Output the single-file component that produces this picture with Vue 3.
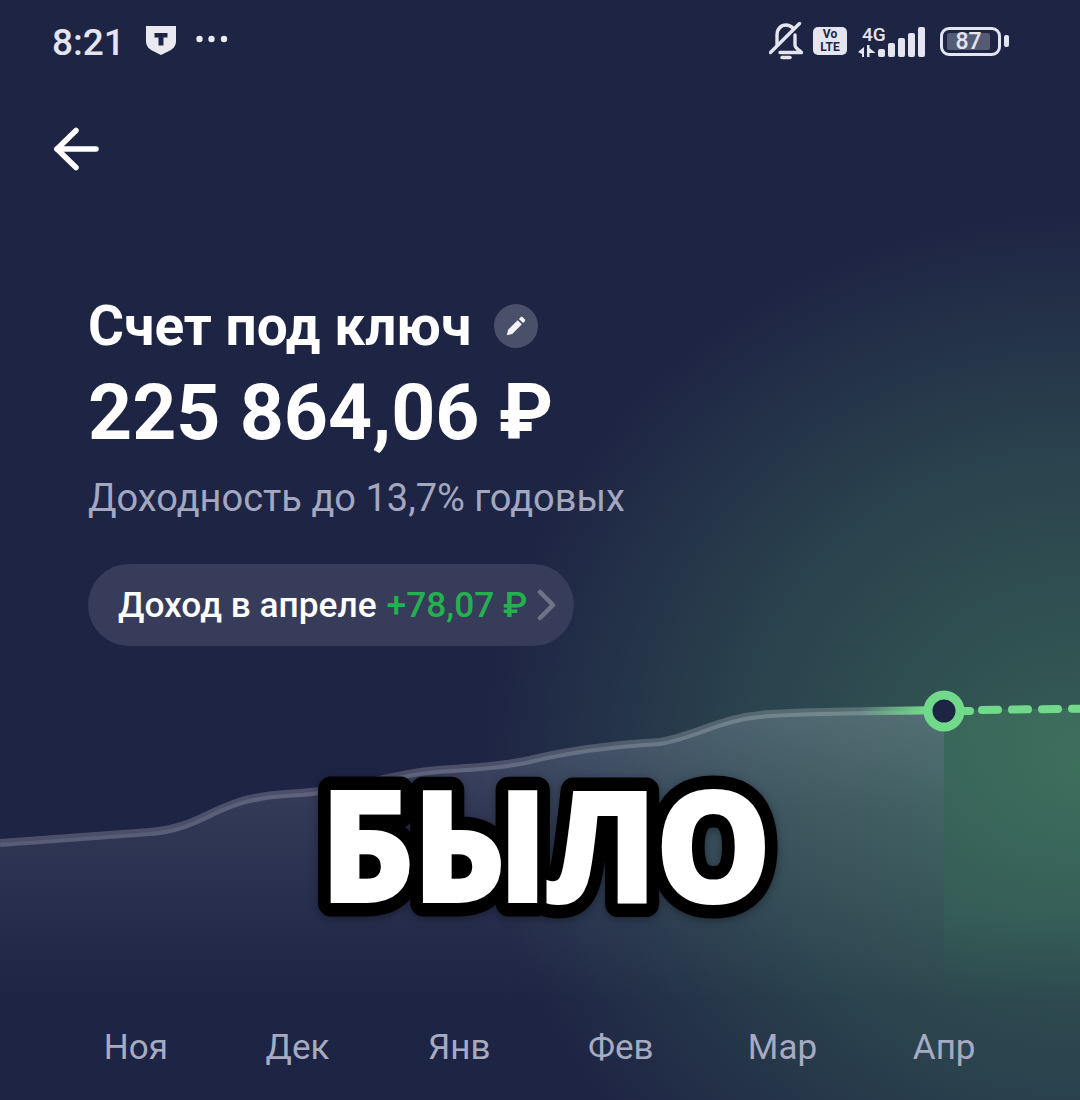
<template>
  <div class="screen">
    <div class="status-bar">
      <div class="status-left">
        <span class="time">8:21</span>
        <svg class="shield" width="30" height="30" viewBox="0 0 30 30">
          <path d="M0 1h30v15c0 5-3 8-7 10l-8 4-8-4C3 24 0 21 0 16z" fill="#e9eaf0" />
          <path d="M8.500 8h13v4.500h-4v8h-5v-8h-4z" fill="#1f2442" />
        </svg>
        <svg class="dots" width="32" height="8" viewBox="0 0 32 8">
          <circle cx="3.500" cy="4" r="3.200" fill="#e9eaf4" />
          <circle cx="15.500" cy="4" r="3.200" fill="#e9eaf4" />
          <circle cx="28" cy="4" r="3.200" fill="#e9eaf4" />
        </svg>
      </div>
      <div class="status-right">
        <svg width="34" height="38" viewBox="0 0 34 38" fill="none" stroke="#e4e5ef" stroke-width="3.400" stroke-linecap="round" stroke-linejoin="round">
          <path d="M8 23V13C8 7 12 3 17 3c3 0 5 1 7 3" />
          <path d="M26 13v10c0 3 4 5 6.500 7.500H11" />
          <path d="M1.500 30.500 30.500 1.500" />
          <path d="M13 35.500h8" stroke-width="3.500" />
        </svg>
        <div class="volte">Vo<br />LTE</div>
        <div class="network">
          <div class="net-left">
            <span class="net-label">4G</span>
            <svg width="19" height="12" viewBox="0 0 19 12" fill="#e4e5ef">
              <path d="M1 7l6-5v10H5V9zM10 0h2.500v3l6 5h-6v4H10z" />
            </svg>
          </div>
          <svg width="47" height="30" viewBox="0 0 47 30" fill="#e4e5ef">
            <rect x="0" y="22" width="7" height="8" rx="2" />
            <rect x="10" y="16" width="7" height="14" rx="2" />
            <rect x="20" y="11" width="7" height="19" rx="2" />
            <rect x="30" y="6" width="7" height="24" rx="2" />
            <rect x="40" y="0" width="7" height="30" rx="2" />
          </svg>
        </div>
        <div class="battery">
          <div class="battery-body"><span class="battery-fill">87</span></div>
          <span class="battery-cap"></span>
        </div>
      </div>
    </div>

    <button class="back">
      <svg width="46" height="44" viewBox="0 0 46 44" fill="none" stroke="#fff" stroke-width="5.500" stroke-linecap="round" stroke-linejoin="round">
        <path d="M4 22h39" />
        <path d="M23 3.500 4 22l19 18.500" />
      </svg>
    </button>

    <div class="info">
      <div class="title-row">
        <h1 class="title">Счет под ключ</h1>
        <span class="edit">
          <svg width="20" height="20" viewBox="0 0 24 24" fill="#f3f3f6">
            <path d="M1 23l1.500-6.500L14 5l5 5L7.500 21.500zM15.500 3.500l2-2c.8-.8 1.800-.8 2.500 0l2.500 2.500c.7.700.7 1.700 0 2.500l-2 2z" />
          </svg>
        </span>
      </div>
      <div class="amount">225 864,06 ₽</div>
      <div class="subtitle">Доходность до 13,7% годовых</div>
      <div class="income">
        <span>Доход в апреле</span>
        <span class="income-value">+78,07 ₽</span>
        <svg width="19" height="32" viewBox="0 0 19 32" fill="none" stroke="#6f7388" stroke-width="4.500" stroke-linecap="round" stroke-linejoin="round">
          <path d="M3 3l13 13L3 29" />
        </svg>
      </div>
    </div>

    <svg class="chart" width="1080" height="310" viewBox="0 690 1080 310">
      <defs>
        <linearGradient id="areaFill" x1="0" y1="0" x2="0" y2="1">
          <stop offset="0" stop-color="#cfe0ee" stop-opacity="0.22" />
          <stop offset="0.35" stop-color="#cfe0ee" stop-opacity="0.11" />
          <stop offset="1" stop-color="#cfe0ee" stop-opacity="0" />
        </linearGradient>
        <linearGradient id="futureFill" x1="0" y1="0" x2="0" y2="1">
          <stop offset="0" stop-color="#6fe08c" stop-opacity="0.15" />
          <stop offset="0.7" stop-color="#6fe08c" stop-opacity="0.1" />
          <stop offset="1" stop-color="#6fe08c" stop-opacity="0" />
        </linearGradient>
        <linearGradient id="lineFade" gradientUnits="userSpaceOnUse" x1="860" y1="0" x2="925" y2="0">
          <stop offset="0" stop-color="#71d98a" stop-opacity="0" />
          <stop offset="1" stop-color="#71d98a" />
        </linearGradient>
      </defs>
      <path :d="`${curve} L944 1000 L0 1000 Z`" fill="url(#areaFill)" />
      <path d="M944 710 L1080 708 L1080 1000 L944 1000 Z" fill="url(#futureFill)" />
      <path :d="curve" fill="none" stroke="#fff" stroke-opacity="0.2" stroke-width="8" />
      <path d="M860 711.500 L944 710" fill="none" stroke="url(#lineFade)" stroke-width="8" />
      <path d="M960 711 L970 711" fill="none" stroke="#71d98a" stroke-width="8" stroke-linecap="round" />
      <path d="M982 710 L1090 708.500" fill="none" stroke="#71d98a" stroke-width="8" stroke-linecap="round" stroke-dasharray="16 14" />
      <circle cx="944" cy="711" r="16" fill="#1e2444" stroke="#71d98a" stroke-width="9" />
    </svg>

    <div class="months">
      <span v-for="month in months" :key="month" class="month">{{ month }}</span>
    </div>

    <svg class="caption" width="1080" height="300" viewBox="0 700 1080 300">
      <text class="caption-text" transform="translate(544 903) scale(0.94 1)" text-anchor="middle">БЫЛО</text>
    </svg>
  </div>
</template>

<script setup>
const months = ['Ноя', 'Дек', 'Янв', 'Фев', 'Мар', 'Апр'];

const curve = 'M0 843 C60 839 110 835 150 832 C205 828 215 798 285 794 C345 791 370 780 420 772 C460 767 490 769 530 760 C570 750 610 745 660 742 C700 735 720 717 770 714 C830 711 880 711 944 710';
</script>

<style>
html,
body {
  margin: 0;
  background: #1e2444;
}
</style>

<style scoped>
.screen {
  position: relative;
  width: 1080px;
  height: 1100px;
  overflow: hidden;
  color: #fff;
  font-family: Roboto, "Liberation Sans", sans-serif;
  background:
    radial-gradient(ellipse 600px 560px at 1080px 770px, rgba(72, 140, 100, 0.55), rgba(72, 140, 100, 0.3) 55%, rgba(72, 140, 100, 0) 100%),
    #1e2444;
}

.status-bar {
  display: flex;
  justify-content: space-between;
  align-items: center;
  height: 84px;
  padding: 0 71px 0 52px;
}

.status-left {
  display: flex;
  align-items: center;
  gap: 22px;
}

.time {
  font-size: 37px;
  font-weight: 500;
  color: #e4e5ef;
}

.dots {
  margin-left: -2px;
  margin-bottom: 6px;
}

.shield {
  margin-left: -1px;
  margin-bottom: 4px;
}

.status-right {
  display: flex;
  align-items: center;
  gap: 10px;
  margin-top: -2px;
}

.volte {
  width: 34px;
  height: 28px;
  border-radius: 5px;
  background: #e4e5ef;
  color: #1e2444;
  font-size: 12px;
  font-weight: 700;
  line-height: 13px;
  text-align: center;
  padding-top: 1px;
  box-sizing: border-box;
}

.network {
  display: flex;
  align-items: flex-end;
  gap: 1px;
}

.net-left {
  display: flex;
  flex-direction: column;
  align-items: flex-start;
  width: 20px;
}

.net-label {
  margin-left: 5px;
  font-size: 19px;
  font-weight: 500;
  line-height: 20px;
  color: #e4e5ef;
  white-space: nowrap;
}

.battery {
  display: flex;
  align-items: center;
  gap: 3px;
  margin-left: 5px;
}

.battery-body {
  width: 51px;
  height: 20px;
  border: 3px solid #e4e5ef;
  border-radius: 9px;
  padding: 3px 0 0 4px;
  box-sizing: content-box;
}

.battery-fill {
  display: block;
  width: 43px;
  height: 17px;
  border-radius: 2px;
  background: #565b75;
  color: #e4e5ef;
  font-size: 23px;
  font-weight: 500;
  line-height: 18px;
  text-align: center;
}

.battery-cap {
  width: 5px;
  height: 12px;
  border-radius: 2px;
  background: #e4e5ef;
}

.back {
  display: block;
  margin: 43px 0 0 53px;
  padding: 0;
  border: none;
  background: none;
  line-height: 0;
}

.info {
  margin-top: 128px;
  padding-left: 88px;
}

.title-row {
  display: flex;
  align-items: center;
  gap: 23px;
  height: 54px;
}

.title {
  margin: 0;
  font-size: 55px;
  font-weight: 700;
  line-height: 54px;
}

.edit {
  display: flex;
  align-items: center;
  justify-content: center;
  width: 44px;
  height: 44px;
  border-radius: 50%;
  background: #4a4f6a;
}

.amount {
  margin-top: 21px;
  font-size: 77px;
  font-weight: 700;
  line-height: 78px;
}

.subtitle {
  margin-top: 24px;
  font-size: 38px;
  line-height: 44px;
  color: #a3a8c0;
}

.income {
  display: flex;
  align-items: center;
  gap: 10px;
  width: 486px;
  height: 82px;
  margin-top: 44px;
  padding-left: 30px;
  box-sizing: border-box;
  border-radius: 41px;
  background: #363c59;
  font-size: 35.300px;
  font-weight: 500;
}

.income-value {
  color: #25b04f;
}

.chart {
  display: block;
  position: absolute;
  left: 0;
  top: 690px;
}

.months {
  position: absolute;
  left: 55px;
  right: 55px;
  top: 997px;
  display: grid;
  grid-template-columns: repeat(6, 1fr);
  height: 100px;
  justify-items: center;
  align-items: center;
}

.month {
  font-size: 35px;
  color: #a7abc2;
}

.caption {
  position: absolute;
  left: 0;
  top: 700px;
  filter: drop-shadow(0 2px 4px rgba(0, 0, 0, 0.35));
}

.caption-text {
  font-family: "Open Sans", sans-serif;
  font-size: 158px;
  font-weight: 800;
  letter-spacing: -4px;
  fill: #fff;
  stroke: #000;
  stroke-width: 27px;
  stroke-linejoin: round;
  paint-order: stroke fill;
}
</style>
